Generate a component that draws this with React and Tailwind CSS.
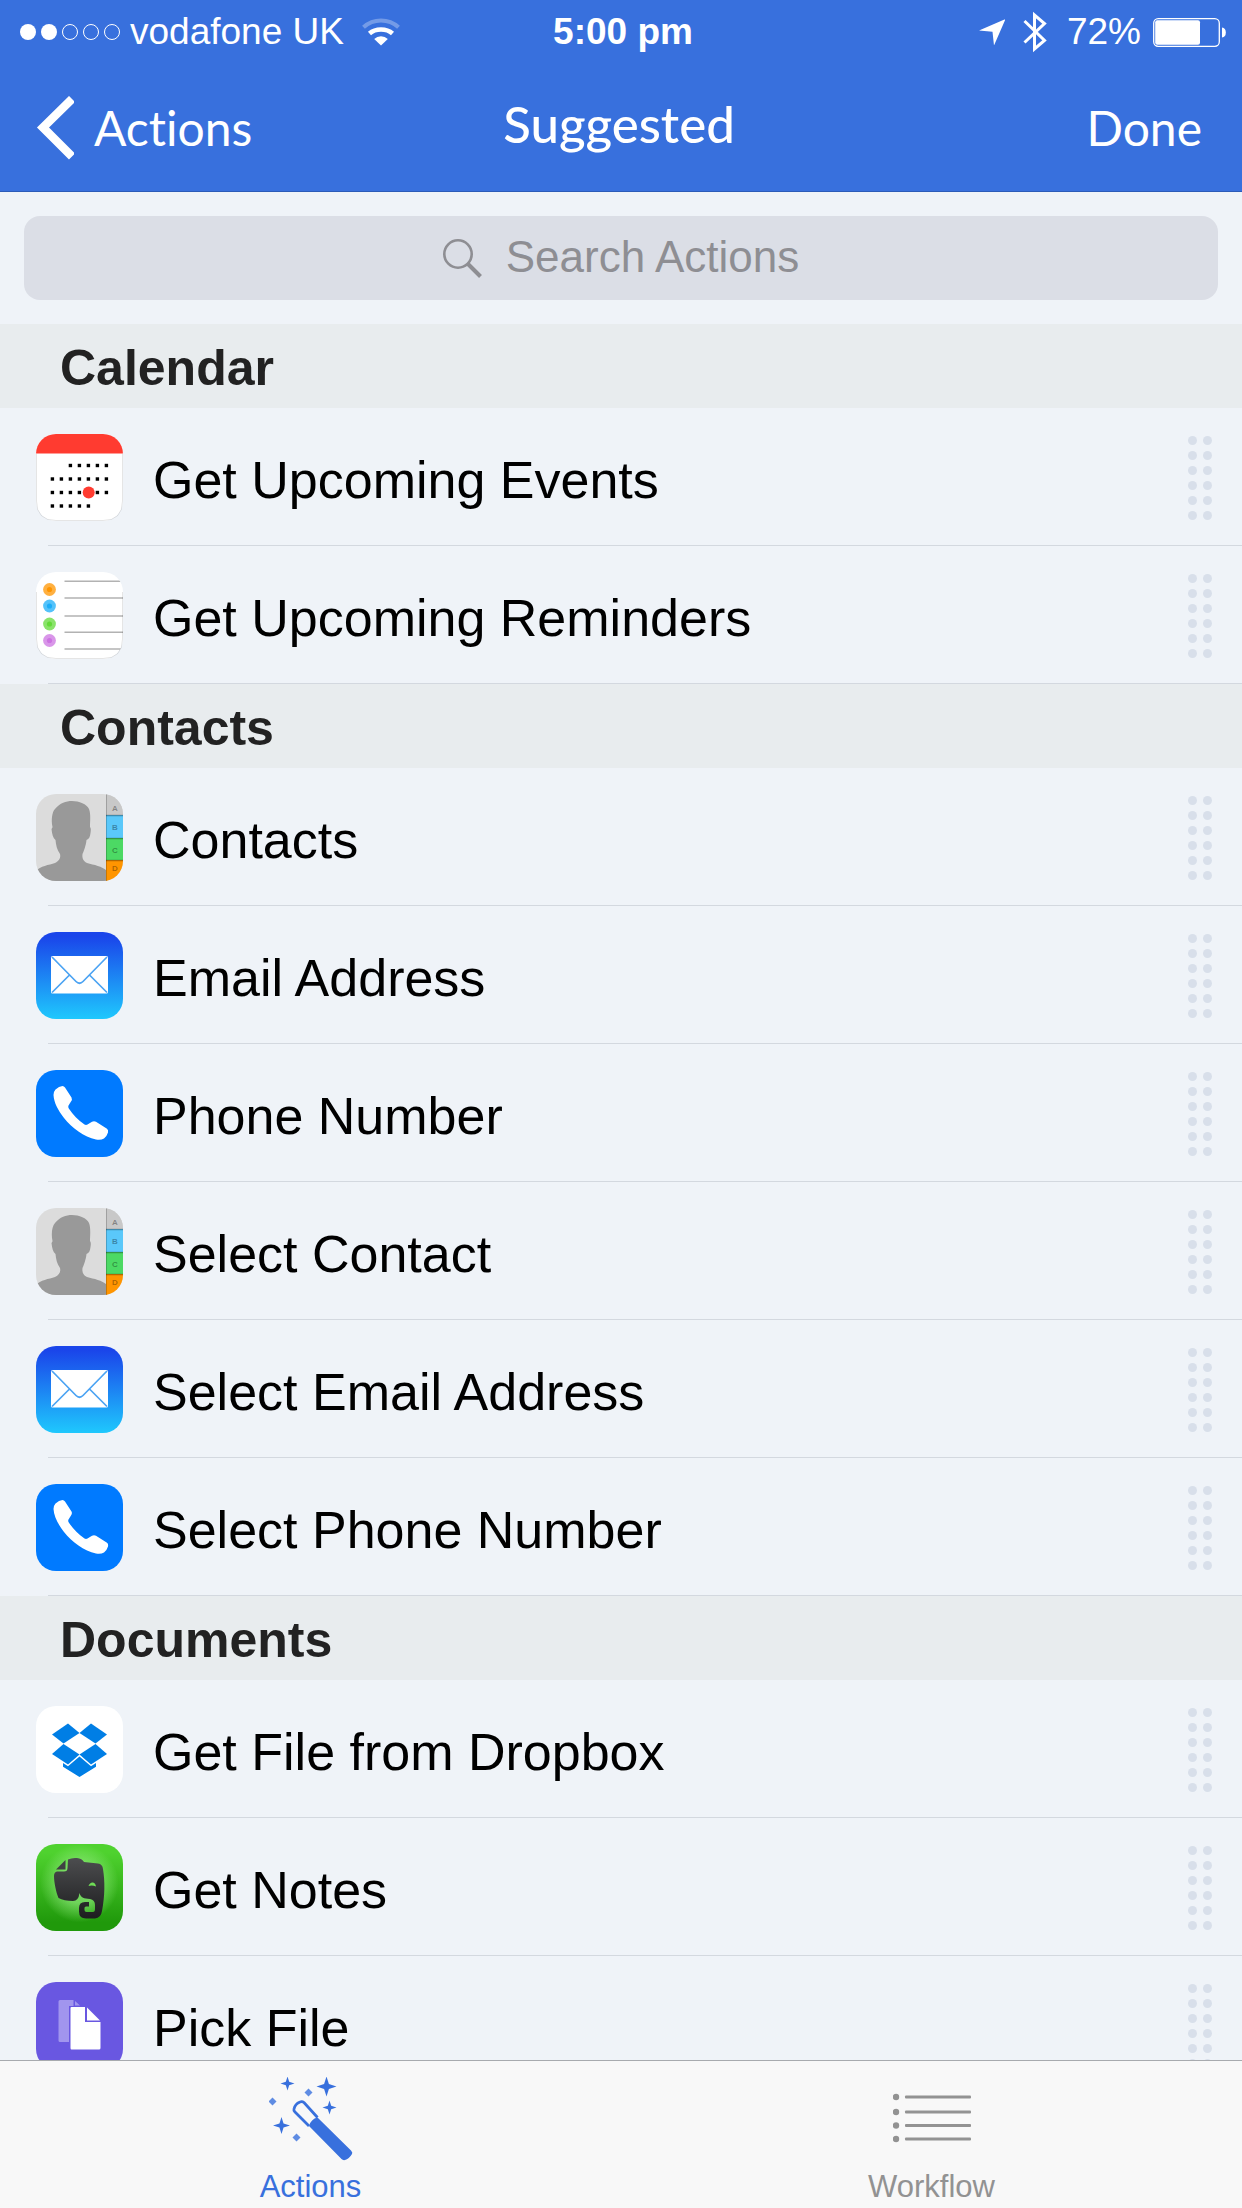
import { useId, useState } from "react";

const sections = [
    {
        title: "Calendar",
        items: [
            { label: "Get Upcoming Events", icon: "calendar" },
            { label: "Get Upcoming Reminders", icon: "reminders" },
        ],
    },
    {
        title: "Contacts",
        items: [
            { label: "Contacts", icon: "contacts" },
            { label: "Email Address", icon: "mail" },
            { label: "Phone Number", icon: "phone" },
            { label: "Select Contact", icon: "contacts" },
            { label: "Select Email Address", icon: "mail" },
            { label: "Select Phone Number", icon: "phone" },
        ],
    },
    {
        title: "Documents",
        items: [
            { label: "Get File from Dropbox", icon: "dropbox" },
            { label: "Get Notes", icon: "evernote" },
            { label: "Pick File", icon: "files" },
        ],
    },
];

/* App icons, all drawn on an 87x87 tile */

const calendarRows = [
    { y: 31.5, from: 2 },
    { y: 45, from: 0 },
    { y: 58.5, from: 0 },
    { y: 72, from: 0, to: 4 },
];

const CalendarIcon = () => (
    <>
        <rect width="87" height="87" fill="#fff" />
        <rect width="87" height="19.5" fill="#ff3b30" />
        {calendarRows.map(({ y, from, to = 6 }) =>
            Array.from({ length: to - from + 1 }, (_, i) => (
                <rect key={`${y}-${i}`} x={14.7 + (from + i) * 9} y={y - 1.7} width="3.4" height="3.4" fill="#000" />
            ))
        )}
        <circle cx="52.7" cy="58.6" r="6" fill="#ff3b30" />
    </>
);

const RemindersIcon = () => (
    <>
        <rect width="87" height="87" fill="#fff" />
        {[
            ["#ff9500", 17.5],
            ["#1badf8", 34],
            ["#63da38", 52],
            ["#cc73e1", 68.5],
        ].map(([color, y]) => (
            <g key={color} fill={color}>
                <circle cx="13.5" cy={y} r="6.4" opacity="0.75" />
                <circle cx="13.5" cy={y} r="2.6" />
            </g>
        ))}
        {[9.3, 26, 44, 60.3, 77].map((y) => (
            <path key={y} d={`M28.5 ${y}H87`} stroke="#b2b2b2" strokeWidth="1.5" />
        ))}
    </>
);

const ContactsIcon = () => (
    <>
        <rect width="87" height="87" fill="#dcdcdc" />
        <path
            d="M0 77C4 72 13 71 19 69C23 67 25 64 24 60C21 56 20 51 19.5 46C17 44 16 40 15.5 35C16 34 16.5 34 16.5 33C15 26 16 18 19 15C24 9 30 7 36 7C43 7 51 10 53 15C55 20 54 28 54 33C55 34 55 36 54.5 39C54 43 53 45 50.5 46C50 51 48 57 46.5 60C46 64 47 67 51 69C58 71 66 72 71 77V87H0Z"
            fill="#999"
        />
        <rect x="70" width="17" height="21" fill="#c8c8c8" />
        <rect x="70" y="21" width="17" height="23" fill="#5ac8fa" />
        <rect x="70" y="44" width="17" height="22" fill="#4cd964" />
        <rect x="70" y="66" width="17" height="21" fill="#ff9500" />
        <path d="M70.5 0V87" stroke="#000" strokeOpacity="0.2" />
        <path d="M70 21.5H87M70 44.5H87M70 66.5H87" stroke="#000" strokeOpacity="0.3" strokeWidth="1.5" />
        <g fontSize="8" fontWeight="bold" textAnchor="middle" fillOpacity="0.35" className="font-['Liberation_Sans',sans-serif]">
            <text x="79" y="16.5">A</text>
            <text x="79" y="36">B</text>
            <text x="79" y="58.5">C</text>
            <text x="79" y="76.5">D</text>
        </g>
    </>
);

const MailIcon = ({ id }) => (
    <>
        <linearGradient id={`${id}-mail`} x1="0" y1="0" x2="0" y2="1">
            <stop offset="0.05" stopColor="#1a45ea" />
            <stop offset="1" stopColor="#1fc8fd" />
        </linearGradient>
        <rect width="87" height="87" fill={`url(#${id}-mail)`} />
        <rect x="15" y="24" width="57" height="37.5" rx="1.5" fill="#fff" />
        <path
            d="M16 25L40 49.5Q43.5 53 47 49.5L71 25M16 60.5L33.5 43M71 60.5L53.5 43"
            fill="none"
            stroke="#4ba3f3"
            strokeWidth="1.7"
        />
    </>
);

const PhoneIcon = () => (
    <>
        <rect width="87" height="87" fill="#007aff" />
        <path
            d="M19.5 19.5Q23 16 26.5 16Q28 16 29 17.5L35.5 27.5Q36.5 29.5 35 31.5L32.5 35.5Q31.8 37 32.8 38.5C37 45 42 50 48.5 54.5Q50 55.3 51.5 54.5L56 51.8Q58 50.8 60 51.8L71 58.8Q72.5 60 72 62.5Q71 66 68 68.5Q65 70.3 60 69.5C48 67 36 58 28 48C22 40 18 33 17.5 25Q17.6 21.5 19.5 19.5Z"
            fill="#fff"
        />
    </>
);

const DropboxIcon = () => (
    <>
        <rect width="87" height="87" fill="#fff" />
        <g fill="#007ee5">
            <path d="M32 17.5L43.5 27L27.5 37.5L16 28.5Z" />
            <path d="M55 17.5L71 28.5L59.5 37.5L43.5 27Z" />
            <path d="M27.5 38L43.5 48.5L32 58.5L16 48Z" />
            <path d="M59.5 38L71 48L55 58.5L43.5 48.5Z" />
            <path d="M43.5 50.5L55 60.2L60 57V60.8L43.5 71L27 60.8V57L32 60.2Z" />
        </g>
    </>
);

const EvernoteIcon = ({ id }) => (
    <>
        <linearGradient id={`${id}-green`} x1="0" y1="0" x2="0" y2="1">
            <stop offset="0.1" stopColor="#4fd22f" />
            <stop offset="0.9" stopColor="#20990b" />
        </linearGradient>
        <radialGradient id={`${id}-glow`} cx="0.5" cy="0.45" r="0.45">
            <stop offset="0.5" stopColor="#9cf08a" stopOpacity="0.6" />
            <stop offset="1" stopColor="#9cf08a" stopOpacity="0" />
        </radialGradient>
        <linearGradient id={`${id}-head`} x1="0" y1="0" x2="0" y2="1">
            <stop stopColor="#4c4d4f" />
            <stop offset="1" stopColor="#1d1d1f" />
        </linearGradient>
        <rect width="87" height="87" fill={`url(#${id}-green)`} />
        <rect width="87" height="87" fill={`url(#${id}-glow)`} />
        <path
            d="M32 15.5Q36 13.5 41 14Q46 14.5 48 18L62 19.5Q66.5 20 67 25C69 37 69 52 66 67Q65 74 59 74.5H50Q43 74.5 43 67.5V64Q43 58 49 58H53V62.5H50Q48.5 62.5 48.5 64V66Q48.5 68 50.5 68H57Q59 68 59 65V61Q59 56 54 55C48 54.5 45 54 43.5 49Q42.5 57 37 57C31 57 26 56 22.5 54C20 48 18 38 18 32Q18 28 21 27.5H28Q31.5 27.5 31.5 24Z"
            fill={`url(#${id}-head)`}
        />
        <path d="M29.5 16V25.5H20Z" fill="#3f4143" />
        <path d="M52.5 42Q54 38 57 38.5Q59.5 39 60 42.5Q56 40.8 52.5 42Z" fill="#6fdc56" />
    </>
);

const FilesIcon = () => (
    <>
        <rect width="87" height="87" fill="#6957e1" />
        <path d="M24 18H37.5V24H33V60H24Q22.5 60 22.5 58.5V19.5Q22.5 18 24 18Z" fill="#a195ee" />
        <path d="M39 19L44 23.5H39Z" fill="#a195ee" />
        <path d="M35.5 25H49V40H64.5V66Q64.5 67.5 63 67.5H35.5Q34.5 67.5 34.5 66V26Q34.5 25 35.5 25Z" fill="#fff" />
        <path d="M51 25.5L64 38.5H51Z" fill="#fff" />
    </>
);

const appIcons = {
    calendar: CalendarIcon,
    reminders: RemindersIcon,
    contacts: ContactsIcon,
    mail: MailIcon,
    phone: PhoneIcon,
    dropbox: DropboxIcon,
    evernote: EvernoteIcon,
    files: FilesIcon,
};

const outlined = ["calendar", "reminders"];

const AppIcon = ({ name }) => {
    const id = useId();
    const Drawing = appIcons[name];
    return (
        <svg viewBox="0 0 87 87" className="size-[87px] shrink-0" aria-hidden="true">
            <clipPath id={`${id}-clip`}>
                <rect width="87" height="87" rx="20" />
            </clipPath>
            <g clipPath={`url(#${id}-clip)`}>
                <Drawing id={id} />
            </g>
            {outlined.includes(name) && (
                <path
                    d="M0.5 20V67Q0.5 86.5 20 86.5H67Q86.5 86.5 86.5 67V20"
                    fill="none"
                    stroke="#000"
                    strokeOpacity="0.1"
                />
            )}
        </svg>
    );
};

const DragHandle = () => (
    <svg viewBox="0 0 24 84" className="h-[84px] w-6 shrink-0 fill-[#d8dfea]" aria-hidden="true">
        {[4.5, 19.5, 34.5, 49.5, 64.5, 79.5].map((y) => (
            <g key={y}>
                <circle cx="4.5" cy={y} r="4.5" />
                <circle cx="19.5" cy={y} r="4.5" />
            </g>
        ))}
    </svg>
);

const StatusBar = () => (
    <div className="grid h-16 grid-cols-[1fr_auto_1fr] items-center pl-5 pr-4 text-[37px]">
        <div className="flex items-center">
            <svg viewBox="0 0 100 16" className="mr-[10px] h-4 w-[100px]" aria-hidden="true">
                <circle cx="8" cy="8" r="8" fill="#fff" />
                <circle cx="29" cy="8" r="8" fill="#fff" />
                <g fill="none" stroke="#fff">
                    <circle cx="50" cy="8" r="7.5" />
                    <circle cx="71" cy="8" r="7.5" />
                    <circle cx="92" cy="8" r="7.5" />
                </g>
            </svg>
            <span>vodafone UK</span>
            <svg viewBox="0 0 38 28" className="ml-[18px] h-7 w-[38px]" aria-hidden="true">
                <g fill="none" stroke="#fff">
                    <path d="M1.5 9.2Q9 2.5 19 2.5Q29 2.5 36.5 9.2" strokeWidth="4.2" opacity="0.3" />
                    <path d="M7.5 15.5Q12 11.500 19 11.5Q26 11.5 30.5 15.5" strokeWidth="4.6" />
                </g>
                <path d="M19 27.500L12.200 21Q15 18.200 19 18.200Q23 18.200 25.800 21Z" fill="#fff" />
            </svg>
        </div>
        <time className="font-bold">5:00 pm</time>
        <div className="flex items-center justify-end">
            <svg viewBox="0 0 26 26" className="mr-[18px] size-[26px] fill-white" aria-hidden="true">
                <path d="M26.5 0L15 26.5L13.5 12.8L0 11.5Z" />
            </svg>
            <svg viewBox="0 0 24 42" className="mr-5 h-[42px] w-6 fill-none stroke-white" strokeWidth="3" aria-hidden="true">
                <path d="M1.500 10L21.500 29.500L11.500 38V4L21.500 12.500L1.500 31.500" />
            </svg>
            <span>72%</span>
            <svg viewBox="0 0 73 29" className="ml-3 h-[29px] w-[73px]" aria-hidden="true">
                <rect x="0.7" y="0.7" width="65.6" height="27.6" rx="4.500" fill="none" stroke="#fff" strokeWidth="1.3" />
                <rect x="2.2" y="2.2" width="44.8" height="24.6" rx="2" fill="#fff" />
                <path d="M69 9.500Q72.8 10 72.8 14.500Q72.8 19 69 19.500Z" fill="#fff" />
            </svg>
        </div>
    </div>
);

const NavBar = () => (
    <nav className="grid h-32 grid-cols-[1fr_auto_1fr] items-center border-b border-[#2c5bb8] pl-9 pr-10 font-['Lato',sans-serif] text-5xl [font-variant-ligatures:none]">
        <a href="#actions" className="flex items-center gap-5">
            <svg viewBox="0 0 38 64" className="h-16 w-[38px] fill-none stroke-white" strokeWidth="8.5" aria-hidden="true">
                <path d="M36 3L7 31.5L36 60.5" />
            </svg>
            Actions
        </a>
        <h1 className="pb-2 text-[51px] font-medium leading-[60px]">Suggested</h1>
        <button type="button" className="justify-self-end">
            Done
        </button>
    </nav>
);

const SearchBar = () => (
    <div className="p-6">
        <label className="flex h-[84px] items-center justify-center gap-6 rounded-2xl bg-[#dbdee6]">
            <svg viewBox="0 0 39 39" className="size-[39px] fill-none stroke-[#8e8e93]" strokeWidth="2.6" aria-hidden="true">
                <circle cx="15" cy="15" r="13.7" />
                <path d="M25 25L37.5 37.5" strokeWidth="4" />
            </svg>
            <input
                type="search"
                aria-label="Search Actions"
                placeholder="Search Actions"
                className="field-sizing-content pb-0.5 text-[44px] leading-[50px] text-black outline-none placeholder:text-[#8e8e93]"
            />
        </label>
    </div>
);

const ActionRow = ({ label, icon }) => (
    <li>
        <div className="flex h-[137px] items-center pl-9 pr-[30px] pt-0.5">
            <AppIcon name={icon} />
            <span className="ml-[30px] flex-1 pt-1 text-[52px] leading-[60px] text-black">{label}</span>
            <DragHandle />
        </div>
        <div className="ml-12 h-px bg-[#d3d8df]" />
    </li>
);

const WandIcon = () => (
    <svg viewBox="0 0 84 84" className="size-[84px] fill-[#3870dd]" aria-hidden="true">
        {[
            [18.5, 6.5, 7],
            [57.5, 9.5, 10],
            [60.5, 30.5, 7],
            [12.5, 48.5, 8.5],
        ].map(([x, y, r]) => (
            <path
                key={x}
                transform={`translate(${x} ${y}) scale(${r / 10})`}
                d="M0 -10L2.4 -2.4L10 0L2.4 2.4L0 10L-2.4 2.4L-10 0L-2.4 -2.4Z"
            />
        ))}
        {[
            [39.5, 15.5],
            [3.5, 24.5],
            [27.5, 60.5],
        ].map(([x, y]) => (
            <path
                key={x}
                transform={`translate(${x} ${y})`}
                opacity="0.8"
                d="M0 -4L2 -2L4 0L2 2L0 4L-2 2L-4 0L-2 -2Z"
            />
        ))}
        <path
            d="M25 32Q26 27 31 25Q33 24 35 25.5L48.5 40.5M25 32Q24.5 33.5 26 35L40 49"
            fill="none"
            stroke="#3870dd"
            strokeWidth="2.8"
        />
        <path d="M40 49Q42 42 48.5 40.5L82 73.5Q84 75.5 83 77Q80 82 76 83Q74 83.5 72.5 82Z" />
    </svg>
);

const ListIcon = () => (
    <svg viewBox="0 0 78 84" className="h-[84px] w-[78px] fill-[#929292]" aria-hidden="true">
        {[20, 35, 48.5, 62].map((y) => (
            <g key={y}>
                <circle cx="3" cy={y} r="3.2" />
                <rect x="12" y={y - 1.6} width="66" height="3.2" rx="1" />
            </g>
        ))}
    </svg>
);

const tabs = [
    { id: "actions", label: "Actions", Icon: WandIcon },
    { id: "workflow", label: "Workflow", Icon: ListIcon },
];

const TabBar = () => {
    const [active, setActive] = useState("actions");
    return (
        <footer className="grid shrink-0 grid-cols-2 border-t border-[#a7aaae] bg-[#f8f8f8]">
            {tabs.map(({ id, label, Icon }) => (
                <button
                    key={id}
                    type="button"
                    onClick={() => setActive(id)}
                    className={`flex flex-col items-center gap-2 pb-[3px] pt-4 text-[31px] leading-9 ${
                        active === id ? "text-[#3870dd]" : "text-[#929292]"
                    }`}
                >
                    <Icon />
                    {label}
                </button>
            ))}
        </footer>
    );
};

const App = () => (
    <div className="flex h-screen flex-col bg-[#eff3f8] font-['Liberation_Sans',Arial,sans-serif]">
        <header className="shrink-0 bg-[#3870dd] text-white">
            <StatusBar />
            <NavBar />
        </header>

        <main className="min-h-0 flex-1 overflow-y-auto [scrollbar-width:none]">
            <SearchBar />
            {sections.map(({ title, items }) => (
                <section key={title}>
                    <h2 className="bg-[#e8ecee] px-15 pb-[10px] pt-[14px] text-[50px] font-bold leading-[60px] text-[#222]">
                        {title}
                    </h2>
                    <ul>
                        {items.map((item) => (
                            <ActionRow key={item.label} {...item} />
                        ))}
                    </ul>
                </section>
            ))}
        </main>

        <TabBar />
    </div>
);

export default App;
